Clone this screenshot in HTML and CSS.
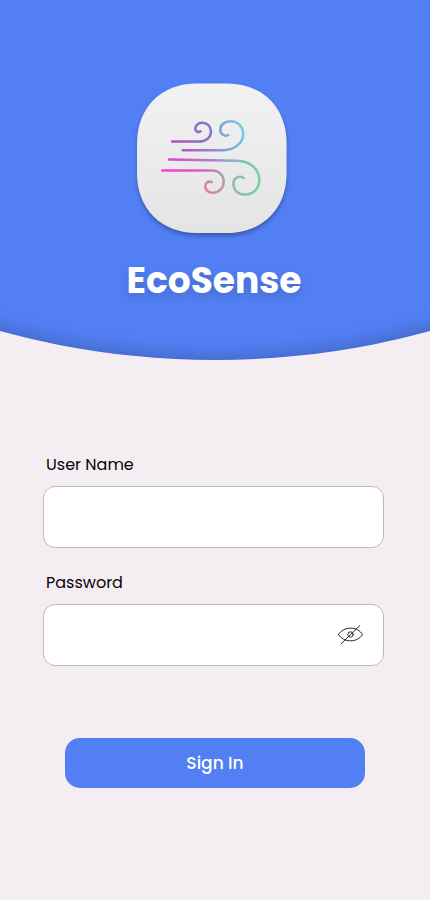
FILE: index.html
```html
<!DOCTYPE html>
<html lang="en">
<head>
<meta charset="utf-8">
<meta name="viewport" content="width=device-width, initial-scale=1">
<title>EcoSense</title>
<link rel="stylesheet" href="styles.css">
</head>
<body>
<header class="hero">
  <svg class="logo" viewBox="137 83 150 150" width="150" height="150" aria-hidden="true">
    <defs>
      <linearGradient id="tile" x1="0" y1="0" x2="0" y2="1"><stop stop-color="#f2f2f2"/><stop offset="1" stop-color="#e4e4e4"/></linearGradient>
      <linearGradient id="g1" gradientUnits="userSpaceOnUse" x1="172" y1="142" x2="212" y2="128"><stop stop-color="#ac50bd"/><stop offset="1" stop-color="#7c7dca"/></linearGradient>
      <linearGradient id="g2" gradientUnits="userSpaceOnUse" x1="183" y1="150" x2="244" y2="134"><stop stop-color="#bd4fc4"/><stop offset=".65" stop-color="#829fda"/><stop offset="1" stop-color="#70cce6"/></linearGradient>
      <linearGradient id="g3" gradientUnits="userSpaceOnUse" x1="169" y1="160" x2="260" y2="180"><stop stop-color="#dc48c9"/><stop offset=".45" stop-color="#b27fc3"/><stop offset=".72" stop-color="#86bbbd"/><stop offset="1" stop-color="#70d6a0"/></linearGradient>
      <linearGradient id="g3b" gradientUnits="userSpaceOnUse" x1="233" y1="185" x2="260" y2="180"><stop stop-color="#91bba0"/><stop offset="1" stop-color="#70d6a0"/></linearGradient>
      <linearGradient id="g4" gradientUnits="userSpaceOnUse" x1="162" y1="170" x2="224" y2="170"><stop stop-color="#f044cf"/><stop offset=".5" stop-color="#e54fc8"/><stop offset="1" stop-color="#aba2aa"/></linearGradient>
      <linearGradient id="g4b" gradientUnits="userSpaceOnUse" x1="205" y1="190" x2="224" y2="181"><stop stop-color="#db7bb0"/><stop offset="1" stop-color="#aba2aa"/></linearGradient>
    </defs>
    <path fill="url(#tile)" d="M137 143.4C137 107.4 161 83.4 197 83.4H226.6C262.6 83.4 286.6 107.4 286.6 143.4V173C286.6 209 262.6 233 226.6 233H197C161 233 137 209 137 173Z"/>
    <g fill="none" stroke-width="2.5" stroke-linecap="round" stroke-linejoin="round">
      <path stroke="url(#g1)" d="M172.2 141.6H199C206 141.6 211 137.5 211 131.5C211 126.3 207 122.8 202.3 122.8C198 122.8 195.3 125.7 195.3 128.7C195.3 131.4 198 132.8 200.6 131.4"/>
      <path stroke="url(#g2)" d="M182.8 150.3H222C234 150.3 243.2 143.5 243.2 134.3C243.2 126.7 237.7 121.3 230.3 121.3C224.4 121.3 220.3 125.2 220.3 129.7C220.3 134.3 224.4 137 228.3 135"/>
      <path stroke="url(#g3)" d="M169 159.5L236.7 160.8C250 161 259.3 169 259.3 180"/>
      <path stroke="url(#g3b)" d="M259.3 180C259.3 188.5 253.3 194.6 245.3 194.6C238.2 194.6 233.4 190 233.4 184C233.4 178.2 238.7 175 243.7 178"/>
      <path stroke="url(#g4)" d="M162.2 170.4L212 170.5C219 170.5 223.7 175 223.7 181.5"/>
      <path stroke="url(#g4b)" d="M223.7 181.5C223.7 188.3 218.7 192.8 213 192.8C208.4 192.8 205.2 190 205.2 186.3C205.2 182.8 208.5 180.8 211.7 182"/>
    </g>
  </svg>
  <h1 class="brand">EcoSense</h1>
</header>
<form class="login">
  <label class="label" for="user">User Name</label>
  <input class="field" id="user" type="text">
  <label class="label" for="password">Password</label>
  <div class="field password">
    <input class="bare" id="password" type="password">
    <svg class="eye" width="26" height="20" viewBox="0.5 0.5 26 20" aria-hidden="true">
      <g fill="none" stroke="#242424" stroke-width="1" stroke-linecap="round">
        <path d="M1 10C3.6 5.8 7.9 3.7 13 3.7S22.4 5.8 25 10C22.4 14.2 18.1 16.3 13 16.3S3.6 14.2 1 10Z"/>
        <circle cx="13" cy="10" r="2.7"/>
        <path d="M22.3 1.1L3.7 19.2"/>
      </g>
    </svg>
  </div>
  <button class="submit" type="button">Sign In</button>
</form>
</body>
</html>
```
FILE: styles.css
```css
* { box-sizing: border-box; }
body {
  margin: 0;
  min-height: 900px;
  background: #f4eef2;
  color: #050505;
  font-family: Poppins, Inter, "Open Sans", sans-serif;
}
.hero {
  position: relative;
  height: 361px;
  padding-top: 83px;
  overflow: hidden;
  display: flex;
  flex-direction: column;
  align-items: center;
}
/* Oversized circle that gives the header its curved lower edge */
.hero::before {
  content: "";
  position: absolute;
  z-index: -1;
  bottom: 1px;
  left: 50%;
  width: 1622px;
  height: 1622px;
  margin-left: -811px;
  border-radius: 50%;
  background: #527ff4;
  box-shadow: inset 0 -4px 18px rgba(0, 0, 0, .2);
}
.logo {
  flex: none;
  margin-right: 6px;
  overflow: visible;
  filter: drop-shadow(0 3px 2px rgba(0, 0, 0, .28));
}
.brand {
  margin: 20px 2px 0 0;
  color: #fff;
  font-size: 36px;
  line-height: 56px;
  font-weight: 700;
  white-space: nowrap;
  text-shadow: 0 4px 10px rgba(0, 0, 0, .16);
}
.login {
  display: flex;
  flex-direction: column;
  padding: 92px 46px 0 43px;
}
.label {
  height: 24px;
  margin: 0 0 9px 3px;
  font-size: 16px;
  line-height: 24px;
}
.field {
  width: 341px;
  height: 62px;
  margin-bottom: 23px;
  border: 1px solid #bfbac0;
  border-radius: 12px;
  background: #fff;
  outline: 0;
}
.password {
  display: flex;
  align-items: center;
  padding-right: 19px;
  margin-bottom: 72px;
}
.bare {
  flex: 1;
  min-width: 0;
  height: 58px;
  border: 0;
  outline: 0;
  background: transparent;
}
.eye { flex: none; }
.submit {
  width: 300px;
  height: 50px;
  margin-left: 22px;
  padding: 0;
  border: 0;
  border-radius: 15px;
  background: #527ff4;
  color: #fff;
  font: 500 17px/50px Poppins, Inter, "Open Sans", sans-serif;
}
```
